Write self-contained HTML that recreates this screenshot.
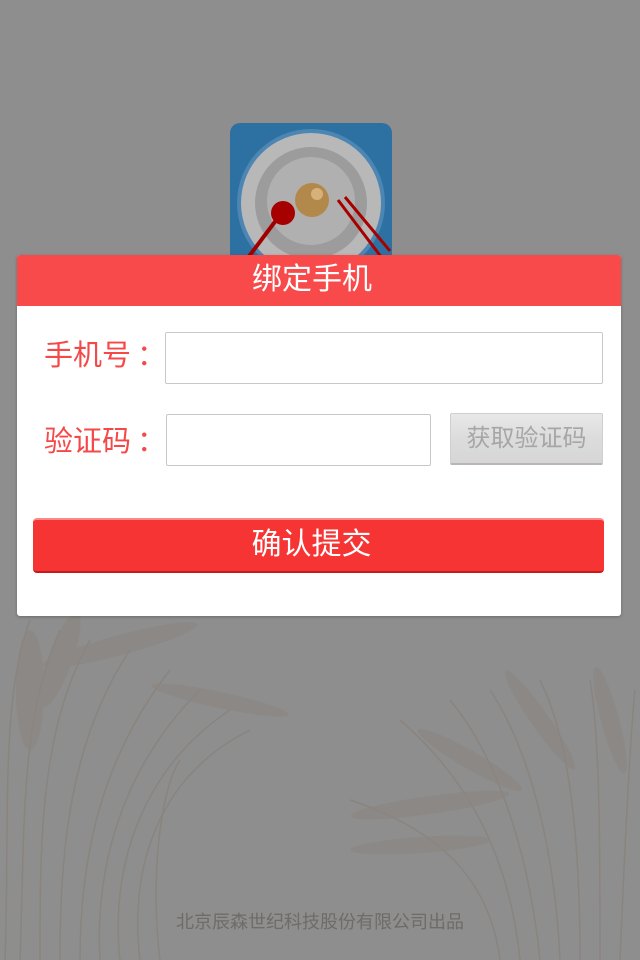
<!DOCTYPE html>
<html><head><meta charset="utf-8"><style>
*{margin:0;padding:0;box-sizing:border-box}
body{width:640px;height:960px;background:#8e8e8e;position:relative;overflow:hidden;font-family:"Liberation Sans","Noto Sans CJK SC",sans-serif}
.abs{position:absolute}
.card{left:17px;top:255px;width:604px;height:361px;background:#fff;border-radius:3px;box-shadow:0 1px 3px rgba(0,0,0,.25);overflow:hidden}
.hd{height:51px;background:#f84a4a;color:#fff;font-size:30px;text-align:center;line-height:50px;padding-right:14px}
.lbl{color:#f54848;font-size:29px;line-height:30px;white-space:nowrap}
.inp{border:1px solid #c8c8c8;border-radius:2px;background:#fff}
.getc{left:433px;top:158px;width:153px;height:52px;background:linear-gradient(#e8e8e8,#dcdcdc 50%,#d6d6d6);border:1px solid #cfcfcf;border-bottom:2px solid #bdb5b5;border-radius:2px;color:#a6a6a6;font-size:24px;text-align:center;line-height:50px}
.sub{left:16px;top:263px;width:571px;height:55px;background:#f73434;border-radius:4px;border-top:2px solid #f88;border-bottom:2px solid #c41b1b;color:#fff;font-size:30px;text-align:center;line-height:50px;padding-right:14px}
.foot{left:0;top:908px;width:640px;text-align:center;color:#6e6b69;font-size:18px}
</style></head><body>
<svg class="abs" style="left:0;top:0" width="640" height="960" viewBox="0 0 640 960">
<g stroke="#8a847f" stroke-width="1.5" fill="none">
<path d="M5 960 C10 820 0 700 30 620"/><path d="M20 960 C25 820 20 720 60 630"/><path d="M40 960 C40 840 40 730 90 640"/><path d="M60 960 C60 850 70 740 130 650"/><path d="M80 960 C80 860 100 760 170 670"/><path d="M100 960 C95 870 120 770 200 690"/><path d="M120 960 C110 870 140 770 230 710"/><path d="M140 960 C130 880 150 780 250 730"/><path d="M160 960 C150 880 160 790 180 760"/>
<path d="M520 960 C510 860 470 780 400 720"/><path d="M540 960 C530 860 500 760 450 700"/><path d="M560 960 C555 850 530 750 490 690"/><path d="M580 960 C580 840 570 740 540 680"/><path d="M600 960 C600 840 600 740 590 680"/><path d="M620 960 C625 840 630 740 635 690"/><path d="M500 960 C490 880 440 830 350 800"/>
</g>
<g fill="#8b8681" opacity=".7">
<ellipse cx="120" cy="645" rx="80" ry="10" transform="rotate(-15 120 645)"/><ellipse cx="220" cy="700" rx="70" ry="8" transform="rotate(12 220 700)"/><ellipse cx="30" cy="690" rx="14" ry="60"/><ellipse cx="60" cy="660" rx="12" ry="50" transform="rotate(20 60 660)"/>
<ellipse cx="430" cy="805" rx="80" ry="9" transform="rotate(-8 430 805)"/><ellipse cx="470" cy="760" rx="60" ry="9" transform="rotate(30 470 760)"/><ellipse cx="540" cy="720" rx="60" ry="9" transform="rotate(55 540 720)"/><ellipse cx="610" cy="720" rx="55" ry="9" transform="rotate(75 610 720)"/><ellipse cx="420" cy="845" rx="70" ry="8" transform="rotate(-4 420 845)"/>
</g>
</svg>
<svg class="abs" style="left:230px;top:123px" width="162" height="140" viewBox="0 0 162 140">
<rect x="0" y="0" width="162" height="160" rx="10" fill="#2d71a3"/>
<circle cx="81" cy="80" r="74" fill="#4d86b3"/>
<circle cx="81" cy="80" r="70" fill="#b8b8b8"/>
<circle cx="81" cy="80" r="56" fill="#9c9c9c"/>
<circle cx="81" cy="78" r="44" fill="#b0b0b0"/>
<circle cx="82" cy="77" r="17" fill="#b3894b"/>
<circle cx="87" cy="71" r="6" fill="#d6b27a"/>
<line x1="50" y1="92" x2="14" y2="140" stroke="#a00000" stroke-width="4"/>
<ellipse cx="53" cy="90" rx="12" ry="12" fill="#a60000"/>
<line x1="108" y1="77" x2="152" y2="135" stroke="#a60000" stroke-width="3"/>
<line x1="115" y1="74" x2="160" y2="128" stroke="#a60000" stroke-width="3"/>
</svg>
<div class="abs card">
<div class="hd">绑定手机</div>
<div class="abs lbl" style="left:27px;top:86px">手机号</div>
<div class="abs lbl" style="left:120px;top:86px">：</div>
<div class="abs inp" style="left:148px;top:77px;width:438px;height:52px"></div>
<div class="abs lbl" style="left:27px;top:172px">验证码</div>
<div class="abs lbl" style="left:120px;top:172px">：</div>
<div class="abs inp" style="left:149px;top:159px;width:265px;height:52px"></div>
<div class="abs getc">获取验证码</div>
<div class="abs sub">确认提交</div>
</div>
<div class="abs foot">北京辰森世纪科技股份有限公司出品</div>
</body></html>
